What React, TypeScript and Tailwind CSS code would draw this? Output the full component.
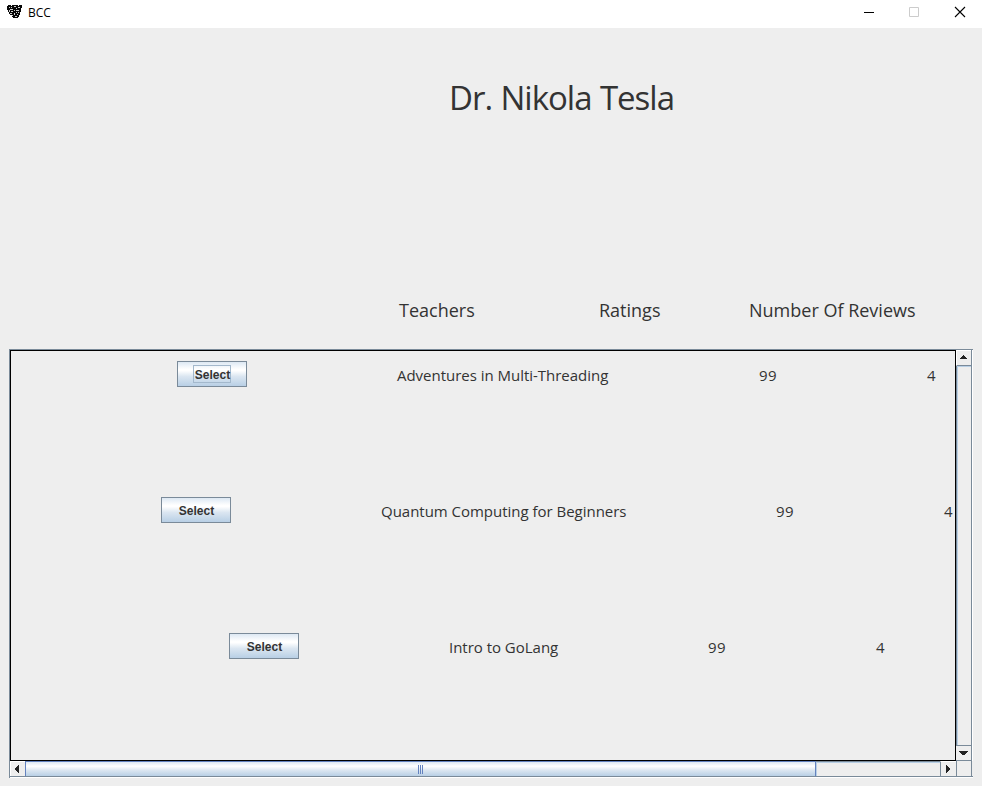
import React from "react";

const rows = [
  { title: "Adventures in Multi-Threading", pad: "pl-[166px]", name: "w-[362px]", focused: true },
  { title: "Quantum Computing for Beginners", pad: "pl-[150px]", name: "w-[395px]", focused: false },
  { title: "Intro to GoLang", pad: "pl-[218px]", name: "w-[259px]", focused: false },
];

function AppIcon() {
  return (
    <svg width="16" height="16" viewBox="0 0 16 16" shapeRendering="crispEdges">
      <path d="M1 1h3v1h1v-1h6v1h1v-1h3v3h-1v4h-1v3h-1v2h-1v1H6v-1H5v-2H3v-1H2v-2H1V6H0V2h1z" fill="#080808" />
      <path d="M2 3h1v1H2zM4 3h1v1H4zM7 2h2v1H7zM11 3h2v1h-2zM3 5h3v1H3zM9 4h1v1H9zM2 6h1v2H2zM7 6h1v1H7zM9 6h3v1H9zM4 7h2v1H4zM9 8h1v1H9zM11 8h1v1h-1zM3 9h2v1H3zM7 9h1v2H7zM10 10h1v1h-1zM5 11h1v1H5zM8 12h2v1H8z" fill="#d0d0d0" />
    </svg>
  );
}

function SelectButton({ focused }: { focused: boolean }) {
  return (
    <button className="flex h-[26px] w-[70px] shrink-0 items-center justify-center border border-[#7a8a99] bg-[linear-gradient(180deg,#dde8f3_0%,#ffffff_30%,#ffffff_36%,#dbe6f1_60%,#b8cfe5_100%)] font-['Liberation_Sans',sans-serif] text-[12px] font-bold text-[#333]">
      <span className={`flex h-[18px] w-[38px] items-center justify-center border pl-px pt-[2px] ${focused ? "border-[#a3b8cc]" : "border-transparent"}`}>Select</span>
    </button>
  );
}

export default function App() {
  return (
    <div className="flex h-[786px] w-[982px] flex-col overflow-hidden bg-[#eeeeee] font-['Open_Sans','Noto_Sans',sans-serif] text-[#333]">
      <header className="flex h-7 shrink-0 items-center bg-white pl-[7px] text-black">
        <div className="-mt-1"><AppIcon /></div>
        <span className="ml-[5px] -mt-[2px] text-[12px]">BCC</span>
        <svg className="ml-auto" width="142" height="28" viewBox="0 0 142 28" fill="none">
          <path d="M24 12.5h10" stroke="#000" />
          <path d="M69.5 7.5h9v9h-9z" stroke="#ccc" />
          <path d="M115 7l10 10M125 7l-10 10" stroke="#000" strokeWidth="1.1" />
        </svg>
      </header>

      <h1 className="h-[250px] shrink-0 pl-[449px] pt-[46px] text-[33px] leading-[48px] tracking-[-1px] [word-spacing:0.8px] whitespace-nowrap">Dr. Nikola Tesla</h1>

      <div className="flex h-[71px] shrink-0 pl-[399px] pt-[20px] text-[18px] leading-[24px] whitespace-nowrap">
        <span className="w-[200px]">Teachers</span>
        <span className="w-[150px]">Ratings</span>
        <span>Number Of Reviews</span>
      </div>

      <div className="ml-[9px] grid h-[429px] w-[964px] shrink-0 grid-cols-[946px_15px] grid-rows-[411px_15px] border border-b-0 border-r-0 border-[#7a8a99]">
        <main className="overflow-hidden border border-black pt-[10px]">
          {rows.map((r) => (
            <div key={r.title} className={`flex h-[136px] items-start whitespace-nowrap text-[15px] ${r.pad}`}>
              <SelectButton focused={r.focused} />
              <div className="ml-[150px] flex pt-[3px] leading-[22px]">
                <span className={`shrink-0 tracking-[-0.02px] ${r.name}`}>{r.title}</span>
                <span className="w-[168px] shrink-0 tracking-[0.3px]">99</span>
                <span>4</span>
              </div>
            </div>
          ))}
        </main>

        <div className="flex h-[411px] w-[17px] flex-col border-r border-white">
          <div className="flex h-full flex-col border-r border-[#7a8a99]">
            <div className="flex h-4 items-start border-b border-l border-t border-b-[#7a8a99] border-l-white border-t-white pl-[3px] pt-[4px]">
              <svg width="7" height="4" viewBox="0 0 7 4" fill="#222" shapeRendering="crispEdges"><path d="M3 0h1v1h1v1h1v1h1v1H0V3h1V2h1V1h1z" /></svg>
            </div>
            <div className="flex-1 border-l border-[#7a8a99]"><div className="h-full border-l border-t border-[#b8cfe5]" /></div>
            <div className="flex h-4 items-center border-b border-t border-[#7a8a99] pl-[3px]">
              <svg width="9" height="4" viewBox="0 0 9 4" fill="#222" shapeRendering="crispEdges"><path d="M0 0h9v1H8v1H7v1H6v1H3V3H2V2H1V1H0z" /></svg>
            </div>
          </div>
        </div>

        <div className="flex h-[17px] w-[963px] border-b border-white">
          <div className="flex h-4 w-full border-b border-[#7a8a99]">
            <div className="flex w-[15px] items-center justify-center border-l border-t border-white pr-[2px]">
              <svg width="4" height="8" viewBox="0 0 4 8" fill="#222" shapeRendering="crispEdges"><path d="M3 0h1v8H3V7H2V6H1V5H0V3h1V2h1V1h1z" /></svg>
            </div>
            <div className="flex w-[791px] items-center justify-center gap-px border-x border-t border-[#6382bf] bg-[linear-gradient(180deg,#dde8f3_0%,#ffffff_30%,#dbe6f1_60%,#b8cfe5_100%)]">
              <i className="h-[9px] w-px bg-[#6382bf]" /><i className="h-[9px] w-px bg-[#6382bf]" /><i className="h-[9px] w-px bg-[#6382bf]" />
            </div>
            <div className="w-[124px] border-t border-[#7a8a99]"><div className="h-full border-l border-t border-[#b8cfe5]" /></div>
            <div className="flex w-4 items-center justify-center border-l border-t border-l-[#7a8a99] border-t-white pr-[2px]">
              <svg width="4" height="8" viewBox="0 0 4 8" fill="#222" shapeRendering="crispEdges"><path d="M0 0h1v1h1v1h1v1h1v2H3v1H2v1H1v1H0z" /></svg>
            </div>
            <div className="w-4 border-x border-[#7a8a99]" />
          </div>
        </div>
      </div>
    </div>
  );
}
